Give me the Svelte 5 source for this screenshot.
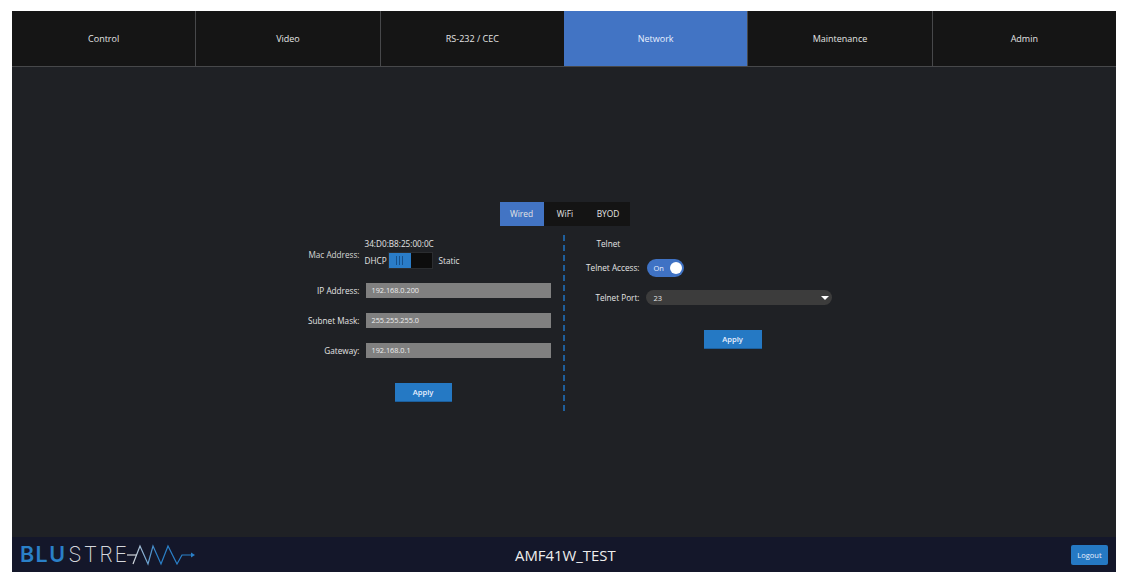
<script>
	const tabs = ['Control', 'Video', 'RS-232 / CEC', 'Network', 'Maintenance', 'Admin']
	const subTabs = ['Wired', 'WiFi', 'BYOD']
	const fields = [
		{ label: 'IP Address:', value: '192.168.0.200' },
		{ label: 'Subnet Mask:', value: '255.255.255.0' },
		{ label: 'Gateway:', value: '192.168.0.1' }
	]
</script>

<div class="app">
	<nav class="tabs">
		{#each tabs as tab}
			<div class="tab" class:active={tab === 'Network'}>{tab}</div>
		{/each}
	</nav>

	<main class="content">
		<div class="subtabs">
			{#each subTabs as tab}
				<div class="subtab" class:active={tab === 'Wired'}>{tab}</div>
			{/each}
		</div>

		<div class="columns">
			<section class="wired">
				<div class="mac-row">
					<span class="label">Mac Address:</span>
					<div class="mac">
						<div class="mac-value">34:D0:B8:25:00:0C</div>
						<div class="mode">
							<span>DHCP</span>
							<div class="slider">
								<div class="slider-on">
									<i></i><i></i><i></i>
								</div>
							</div>
							<span class="static">Static</span>
						</div>
					</div>
				</div>

				{#each fields as field}
					<div class="field-row">
						<span class="label">{field.label}</span>
						<div class="input">{field.value}</div>
					</div>
				{/each}

				<button class="apply apply-left">Apply</button>
			</section>

			<section class="telnet">
				<div class="telnet-title">Telnet</div>
				<div class="telnet-row access">
					<span class="label">Telnet Access:</span>
					<div class="switch">
						<span>On</span>
						<b></b>
					</div>
				</div>
				<div class="telnet-row port">
					<span class="label">Telnet Port:</span>
					<div class="select">
						<span>23</span>
						<svg width="8" height="4" viewBox="0 0 8 4"><path d="M0 0h8L4 4z" fill="#fff" /></svg>
					</div>
				</div>
				<button class="apply apply-right">Apply</button>
			</section>
		</div>
	</main>

	<footer class="footer">
		<div class="logo">
			<span class="blu">BLU</span><span class="stream">STRE</span>
			<svg class="wave" width="70" height="22" viewBox="0 0 70 22" fill="none">
				<defs>
					<linearGradient id="wave-fade" gradientUnits="userSpaceOnUse" x1="6" y1="0" x2="30" y2="0">
						<stop offset="0" stop-color="#d4d7dc" />
						<stop offset="1" stop-color="#2a80c8" />
					</linearGradient>
				</defs>
				<path d="M0 11h10" stroke="#d4d7dc" stroke-width="1.2" />
				<path d="M6 20 13 2l8 18 5-18 8 18 7-18 9 18 5-9h9" stroke="url(#wave-fade)" stroke-width="1.2" />
				<path d="M64 8.5l4 2.5-4 2.5z" fill="#2a80c8" />
			</svg>
		</div>
		<div class="device">AMF41W_TEST</div>
		<button class="logout">Logout</button>
	</footer>
</div>

<style>
	:global(body) {
		margin: 0;
		background: #fff;
	}

	.app {
		box-sizing: border-box;
		width: 1104px;
		height: 561px;
		margin: 11px 0 0 12px;
		display: flex;
		flex-direction: column;
		background: #1f2125;
		color: #e4e4e4;
		font-family: "Open Sans", "Noto Sans", sans-serif;
		font-size: 8.2px;
	}

	.tabs {
		display: flex;
		height: 55px;
		flex: none;
		background: #151515;
		border-bottom: 1px solid #47484a;
	}

	.tab {
		flex: 1;
		display: flex;
		align-items: center;
		justify-content: center;
		font-size: 9px;
		border-left: 1px solid #47484a;
	}

	.tab:first-child {
		border-left: 0;
	}

	.tab.active {
		background: #4274c4;
		color: #e8f0ff;
		border-left: 0;
	}

	.content {
		flex: 1;
		display: flex;
		flex-direction: column;
		align-items: center;
		padding-top: 135px;
		box-sizing: border-box;
	}

	.subtabs {
		display: flex;
		height: 24px;
		background: #141414;
		margin-left: 1px;
		margin-bottom: 9px;
	}

	.subtab {
		display: flex;
		align-items: center;
		justify-content: center;
		width: 43px;
		font-size: 8.4px;
		padding-bottom: 1px;
		box-sizing: border-box;
	}

	.subtab.active {
		background: #4274c4;
		width: 44px;
	}

	.columns {
		display: flex;
		height: 176px;
		width: 534px;
		margin-left: 5px;
	}

	.wired {
		width: 265px;
		display: flex;
		flex-direction: column;
		border-right: 2px dashed #1f5f9c;
		box-sizing: border-box;
	}

	.label {
		display: block;
		text-align: right;
	}

	.mac-row {
		display: flex;
		align-items: center;
		gap: 5px;
		height: 39px;
	}

	.mac-row .label {
		width: 60px;
		color: #d8d8d8;
	}

	.mac {
		margin-top: -3px;
	}

	.mac-value {
		line-height: 12px;
		margin-bottom: 2px;
	}

	.mode {
		display: flex;
		align-items: center;
		gap: 5px;
		height: 17px;
	}

	.mode span:first-child {
		margin-right: -4px;
	}

	.static {
		margin-left: 1px;
	}

	.slider {
		width: 45px;
		height: 17px;
		background: #0d0d0d;
		box-sizing: border-box;
		border: 1px solid #2b2d30;
	}

	.slider-on {
		width: 22px;
		height: 100%;
		background: #2a7cc7;
		display: flex;
		align-items: center;
		justify-content: center;
		gap: 2px;
	}

	.slider-on i {
		width: 1px;
		height: 9px;
		background: #16508a;
	}

	.field-row {
		display: flex;
		align-items: center;
		gap: 6px;
		height: 15px;
		margin-bottom: 15px;
	}

	.mac-row + .field-row {
		margin-top: 9px;
	}

	.field-row .label {
		width: 60px;
	}

	.input {
		width: 185px;
		height: 15px;
		line-height: 15px;
		background: #808080;
		padding-left: 6px;
		box-sizing: border-box;
		font-size: 7.3px;
		color: #eee;
	}

	.apply {
		width: 57px;
		height: 19px;
		background: #2579c4;
		border: 0;
		border-bottom: 1px solid #1c5f9d;
		padding: 0;
		color: #e8f0ff;
		font-family: inherit;
		font-size: 7.6px;
		font-weight: 600;
	}

	.apply-left {
		margin: 10px 0 0 95px;
	}

	.telnet {
		flex: 1;
		display: flex;
		flex-direction: column;
	}

	.telnet-title {
		line-height: 12px;
		margin: 3px 0 0 32px;
	}

	.telnet-row {
		display: flex;
		align-items: center;
		gap: 7px;
	}

	.telnet-row .label {
		width: 75px;
	}

	.access {
		height: 18px;
		margin-top: 9px;
	}

	.access .label {
		padding-bottom: 1px;
	}

	.switch {
		width: 37px;
		height: 18px;
		border-radius: 9px;
		background: #3f72c4;
		display: flex;
		align-items: center;
		justify-content: space-between;
		padding: 0 2px 0 7px;
		box-sizing: border-box;
		font-size: 7.5px;
		color: #e8f0ff;
	}

	.switch b {
		width: 12px;
		height: 12px;
		border-radius: 50%;
		background: #fff;
	}

	.port {
		margin-top: 13px;
	}

	.select {
		width: 186px;
		height: 15px;
		margin-left: -1px;
		border-radius: 8px;
		background: #3c3c3c;
		display: flex;
		align-items: center;
		justify-content: space-between;
		padding: 0 3px 0 8px;
		box-sizing: border-box;
		font-size: 7.5px;
	}

	.apply-right {
		margin: 25px 0 0 139px;
		width: 58px;
	}

	.footer {
		flex: none;
		height: 35px;
		background: #14172a;
		display: flex;
		align-items: center;
		justify-content: space-between;
		padding: 0 8px;
		position: relative;
	}

	.logo {
		display: flex;
		align-items: center;
		font-family: Inter, "Open Sans", sans-serif;
		font-size: 21.5px;
		line-height: 1;
	}

	.blu {
		color: #2a80c8;
		font-weight: 600;
		letter-spacing: 1.4px;
		margin-right: 2px;
	}

	.stream {
		color: #d4d7dc;
		font-weight: 200;
		letter-spacing: 2px;
	}

	.wave {
		margin-left: -2px;
	}

	.device {
		position: absolute;
		left: 503px;
		font-size: 14.9px;
		color: #eee;
	}

	.logout {
		width: 37px;
		height: 20px;
		background: #2579c4;
		border: 0;
		border-radius: 2px;
		padding: 0;
		color: #e8f0ff;
		font-family: inherit;
		font-size: 7.5px;
	}
</style>
